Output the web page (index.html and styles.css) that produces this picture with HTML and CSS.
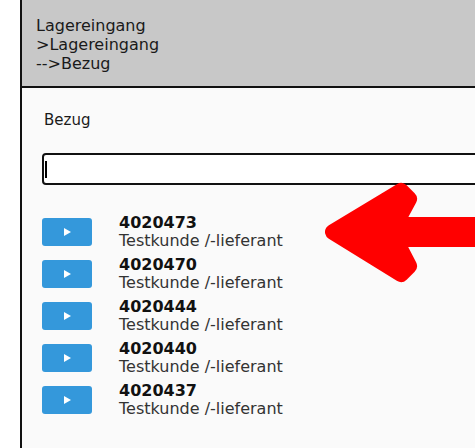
FILE: index.html
```html
<!DOCTYPE html>
<html lang="de">

<head>
    <meta charset="UTF-8">
    <meta name="viewport" content="width=device-width, initial-scale=1">
    <title>Lagereingang - Bezug</title>
    <link rel="stylesheet" href="styles.css">
</head>

<body>
    <div class="page">
        <header class="crumbs">
            <div>Lagereingang</div>
            <div>&gt;Lagereingang</div>
            <div>--&gt;Bezug</div>
        </header>

        <main class="content">
            <label for="bezug" class="field-label">Bezug</label>
            <div class="field-wrap">
                <input type="text" id="bezug" class="field-input">
                <span class="caret"></span>
            </div>

            <ul class="order-list">
                <li class="order-row">
                    <button type="button" class="go-button"><span class="play"></span></button>
                    <div class="order-info">
                        <div class="order-no">4020473</div>
                        <div class="order-name">Testkunde /-lieferant</div>
                    </div>
                </li>
                <li class="order-row">
                    <button type="button" class="go-button"><span class="play"></span></button>
                    <div class="order-info">
                        <div class="order-no">4020470</div>
                        <div class="order-name">Testkunde /-lieferant</div>
                    </div>
                </li>
                <li class="order-row">
                    <button type="button" class="go-button"><span class="play"></span></button>
                    <div class="order-info">
                        <div class="order-no">4020444</div>
                        <div class="order-name">Testkunde /-lieferant</div>
                    </div>
                </li>
                <li class="order-row">
                    <button type="button" class="go-button"><span class="play"></span></button>
                    <div class="order-info">
                        <div class="order-no">4020440</div>
                        <div class="order-name">Testkunde /-lieferant</div>
                    </div>
                </li>
                <li class="order-row">
                    <button type="button" class="go-button"><span class="play"></span></button>
                    <div class="order-info">
                        <div class="order-no">4020437</div>
                        <div class="order-name">Testkunde /-lieferant</div>
                    </div>
                </li>
            </ul>
        </main>
    </div>

    <!-- annotation arrow -->
    <svg class="marker" width="475" height="448" viewBox="0 0 475 448">
        <path d="M333 232 L401 191 L409 199 L395 225 L480 225 L480 239 L395 239 L409 266 L401 274 Z"
            fill="#ff0000" stroke="#ff0000" stroke-width="16" stroke-linejoin="round" />
    </svg>
</body>

</html>
```

FILE: styles.css
```css
:root {
    --header-bg: #c8c8c8;
    --content-bg: #fafafa;
    --border-dark: #111;
    --button-blue: #3498db;
    --text-main: #1a1a1a;
    --text-muted: #333;
    --font-main: "DejaVu Sans", Verdana, sans-serif;
}

html,
body {
    margin: 0;
    padding: 0;
    height: 100%;
    overflow: hidden;
    background-color: #fff;
    font-family: var(--font-main);
}

.page {
    margin-left: 20px;
    width: 760px;
    min-height: 100%;
    border-left: 2px solid var(--border-dark);
    background-color: var(--content-bg);
}

.crumbs {
    background-color: var(--header-bg);
    border-bottom: 2px solid var(--border-dark);
    padding: 16px 0 13px 14px;
    height: 57px;
    font-size: 16px;
    line-height: 19.2px;
    color: var(--text-main);
}

.content {
    padding: 24px 0 0 20px;
}

.field-label {
    display: block;
    margin-left: 2px;
    font-size: 15px;
    line-height: 17.5px;
    color: var(--text-main);
}

.field-wrap {
    position: relative;
    margin-top: 23px;
}

.field-input {
    display: block;
    box-sizing: border-box;
    width: 700px;
    height: 32px;
    margin: 0;
    padding: 0 3px;
    border: 2px solid var(--border-dark);
    border-radius: 4px;
    background-color: #fff;
    font-family: var(--font-main);
    font-size: 16px;
    outline: none;
}

.caret {
    position: absolute;
    left: 3px;
    top: 8px;
    width: 2px;
    height: 17px;
    background-color: #000;
}

.order-list {
    list-style: none;
    margin: 29px 0 0 0;
    padding: 0;
}

.order-row {
    display: flex;
    align-items: center;
    gap: 27px;
    margin-bottom: 5px;
}

.go-button {
    display: flex;
    align-items: center;
    justify-content: center;
    width: 50px;
    height: 28px;
    padding: 0;
    border: none;
    border-radius: 3px;
    background-color: var(--button-blue);
}

.play {
    width: 0;
    height: 0;
    margin-left: 1px;
    border-left: 7px solid #fff;
    border-top: 4px solid transparent;
    border-bottom: 4px solid transparent;
}

.order-info {
    font-size: 16px;
    line-height: 18.5px;
}

.order-no {
    font-weight: bold;
    color: #111;
}

.order-name {
    color: var(--text-muted);
}

.marker {
    position: absolute;
    top: 0;
    left: 0;
    pointer-events: none;
}
```
